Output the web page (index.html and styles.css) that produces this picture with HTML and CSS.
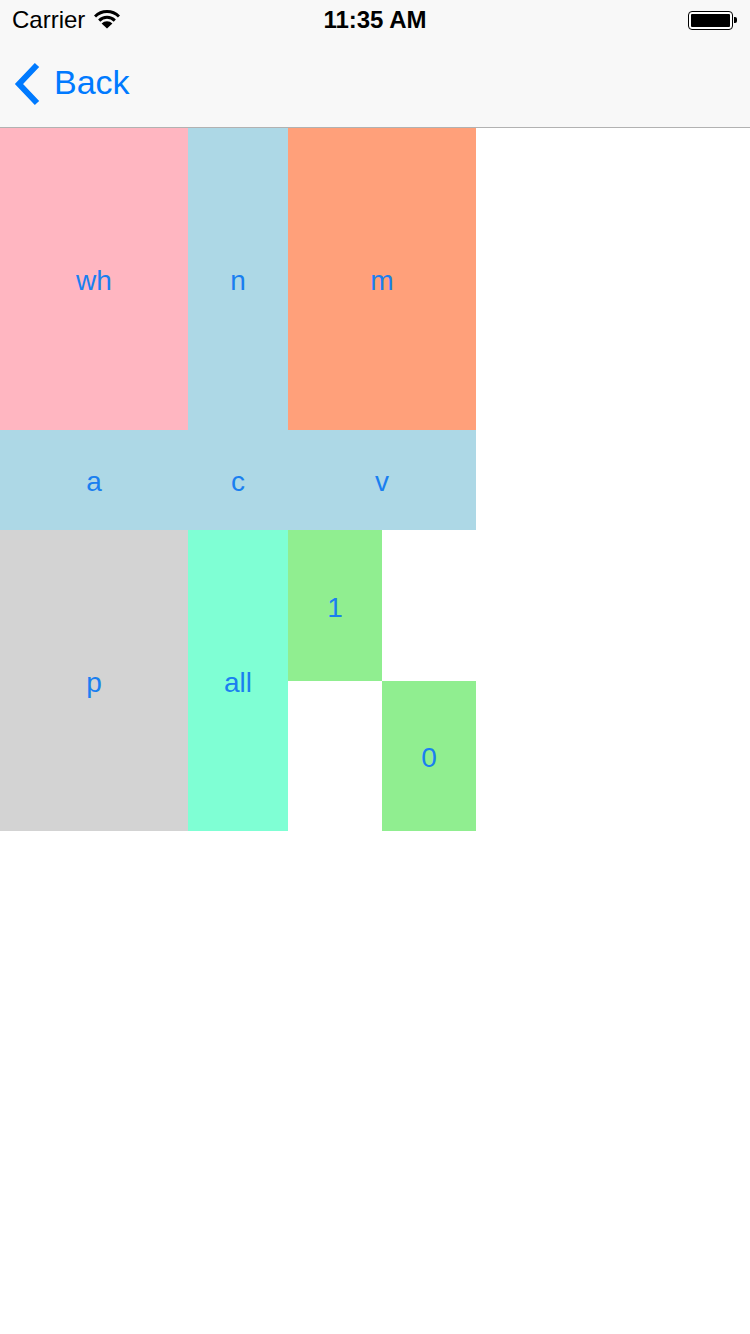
FILE: index.html
```html
<!DOCTYPE html>
<html>
<head>
    <meta charset="UTF-8">
    <title>Grid</title>
    <link rel="stylesheet" href="styles.css">
</head>
<body>
    <div class="bar">
        <div class="status">
            <div class="carrier">
                Carrier
                <svg class="wifi" width="26" height="19" viewBox="0 0 26 19">
                    <path d="M1 6.5 A17 17 0 0 1 25 6.5" fill="none" stroke="#000" stroke-width="3"/>
                    <path d="M5.2 10.6 A11 11 0 0 1 20.8 10.6" fill="none" stroke="#000" stroke-width="3"/>
                    <path d="M13 18.5 L7.6 13.6 A7.6 7.6 0 0 1 18.4 13.6 Z" fill="#000"/>
                </svg>
            </div>
            <div class="time">11:35 AM</div>
            <div class="battery">
                <div class="cell"></div>
                <div class="nub"></div>
            </div>
        </div>
        <div class="nav">
            <svg class="chevron" width="28" height="44" viewBox="0 0 28 44">
                <path d="M23 3 L5 22 L23 41" fill="none" stroke="#007aff" stroke-width="6"/>
            </svg>
            <span class="back">Back</span>
        </div>
    </div>

    <div class="grid">
        <div class="box pink">wh</div>
        <div class="box blue">n</div>
        <div class="box salmon">m</div>
        <div class="box blue">a</div>
        <div class="box blue">c</div>
        <div class="box blue">v</div>
        <div class="box gray">p</div>
        <div class="box aqua">all</div>
        <div class="quad">
            <div class="box green">1</div>
            <div></div>
            <div></div>
            <div class="box green">0</div>
        </div>
    </div>
</body>
</html>
```

FILE: styles.css
```css
body {
    margin: 0;
    background-color: #fff;
    font-family: "Liberation Sans", Arial, sans-serif;
}

.bar {
    background-color: #f8f8f8;
    height: 127px;
    border-bottom: 1px solid #b2b2b2;
}

.status {
    height: 40px;
    display: flex;
    align-items: center;
    justify-content: space-between;
    padding: 0 13px 0 12px;
    font-size: 24px;
    color: #000;
    position: relative;
}

.carrier {
    display: flex;
    align-items: center;
    gap: 9px;
}

.wifi {
    margin-top: -2px;
}

.time {
    position: absolute;
    left: 0;
    right: 0;
    text-align: center;
    font-weight: bold;
    pointer-events: none;
}

.battery {
    display: flex;
    align-items: center;
}

.battery .cell {
    width: 39px;
    height: 13px;
    background-color: #000;
    border: 2px solid #fff;
    outline: 1.5px solid #000;
    border-radius: 3px;
}

.battery .nub {
    width: 3px;
    height: 6px;
    margin-left: 2px;
    background-color: #000;
    border-radius: 0 2px 2px 0;
}

.nav {
    height: 87px;
    display: flex;
    align-items: center;
    padding-left: 14px;
    gap: 12px;
}

.back {
    color: #007aff;
    font-size: 34px;
    margin-top: -2px;
}

.grid {
    display: grid;
    grid-template-columns: 188px 100px 188px;
    grid-template-rows: 302px 100px 301px;
}

.box {
    display: flex;
    align-items: center;
    justify-content: center;
    padding-top: 4px;
    color: #1a7ff0;
    font-size: 28px;
}

.quad {
    display: grid;
    grid-template-columns: 94px 94px;
    grid-template-rows: 151px 150px;
}

.pink { background-color: #ffb6c1; }
.blue { background-color: #add8e6; }
.salmon { background-color: #ffa07a; }
.gray { background-color: #d3d3d3; }
.aqua { background-color: #7fffd4; }
.green { background-color: #90ee90; }
```
